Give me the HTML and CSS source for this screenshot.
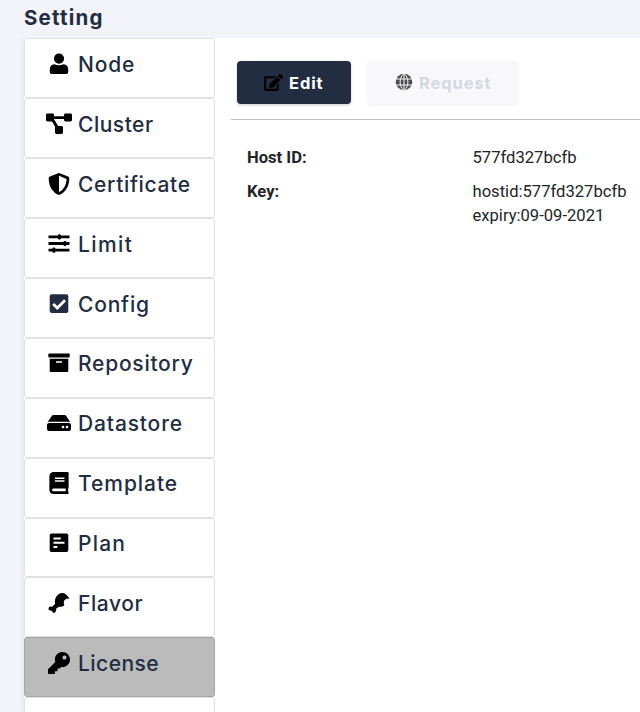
FILE: index.html
```html
<!DOCTYPE html>
<html lang="en">
<head>
<meta charset="utf-8">
<title>Setting</title>
<link rel="stylesheet" href="styles.css">
</head>
<body>
<h1 class="title">Setting</h1>
<div class="layout">
  <nav class="menu">
    <a class="item"><svg class="icon" viewBox="0 0 24 22"><circle cx="12" cy="5.6" r="5.1"/><path d="M7.5 11.2Q12 13.2 16.500 11.200Q21.200 11.800 21.200 16.500V19Q21.200 21 19.200 21H4.800Q2.800 21 2.800 19V16.500Q2.800 11.800 7.500 11.200Z"/></svg><span class="label node">Node</span></a>
    <a class="item"><svg class="icon wide" viewBox="0 0 28 22"><rect x="1" y="0.500" width="8" height="8" rx="1.400"/><rect x="19" y="0.500" width="8" height="8" rx="1.400"/><rect x="10" y="13" width="8" height="8" rx="1.400"/><path d="M8 3.300H20V6H8Z M6.300 7.300L8.900 5.900L13.300 13.300L10.700 14.700Z"/></svg><span class="label cluster">Cluster</span></a>
    <a class="item"><svg class="icon" viewBox="0 0 512 512"><path fill-rule="evenodd" d="M466.500 83.700l-192-80a48.150 48.150 0 0 0-36.900 0l-192 80C27.700 91.100 16 108.600 16 128c0 198.500 114.500 335.700 221.500 380.300 11.800 4.900 25.100 4.900 36.900 0C360.100 472.600 496 349.300 496 128c0-19.400-11.700-36.900-29.500-44.300zM256.100 446.300l-.1-381 175.900 73.300c-3.300 151.400-82.100 261.100-175.800 307.700z"/></svg><span class="label certificate">Certificate</span></a>
    <a class="item"><svg class="icon" viewBox="0 0 24 22"><path d="M1.500 2.500H22.500V5.300H1.500ZM1.500 9.100H22.500V11.900H1.500ZM1.500 15.700H22.500V18.500H1.500Z"/><rect x="11" y="1.300" width="2.800" height="5.200" rx="1"/><rect x="16.500" y="7.900" width="2.800" height="5.200" rx="1"/><rect x="5.500" y="14.500" width="2.800" height="5.200" rx="1"/></svg><span class="label limit">Limit</span></a>
    <a class="item"><svg class="icon navy" viewBox="0 0 24 22"><rect x="2.700" y="1.300" width="18.600" height="18.600" rx="2"/><path class="line" d="M6.200 11.100L10.300 15L18 7.200"/></svg><span class="label config">Config</span></a>
    <a class="item"><svg class="icon" viewBox="0 0 24 22"><rect x="1.300" y="1.500" width="21.400" height="4" rx="1"/><path fill-rule="evenodd" d="M2.700 6.700H21.300V18.700Q21.300 20 20 20H4Q2.700 20 2.700 18.700ZM9 9.300V10.700H15V9.300Z"/></svg><span class="label repository">Repository</span></a>
    <a class="item"><svg class="icon" viewBox="0 0 576 512"><path d="M576 304v96c0 26.500-21.500 48-48 48H48c-26.500 0-48-21.500-48-48v-96c0-26.500 21.500-48 48-48h480c26.500 0 48 21.500 48 48zm-48-80a79.600 79.600 0 0 1 30.800 6.200L462.300 85.400A48 48 0 0 0 422.300 64H153.700a48 48 0 0 0-40 21.400L17.200 230.200A79.600 79.600 0 0 1 48 224zm-48 96c-17.700 0-32 14.300-32 32s14.300 32 32 32 32-14.300 32-32-14.300-32-32-32zm-96 0c-17.700 0-32 14.300-32 32s14.300 32 32 32 32-14.300 32-32-14.300-32-32-32z"/></svg><span class="label datastore">Datastore</span></a>
    <a class="item"><svg class="icon" viewBox="0 0 448 512"><path d="M448 360V24c0-13.300-10.700-24-24-24H96C43 0 0 43 0 96v320c0 53 43 96 96 96h328c13.300 0 24-10.700 24-24v-16c0-7.500-3.500-14.300-8.900-18.700-4.200-15.400-4.200-59.300 0-74.700 5.400-4.300 8.900-11.100 8.900-18.600zM128 134c0-3.300 2.700-6 6-6h212c3.300 0 6 2.700 6 6v20c0 3.300-2.700 6-6 6H134c-3.300 0-6-2.700-6-6v-20zm0 64c0-3.300 2.700-6 6-6h212c3.300 0 6 2.700 6 6v20c0 3.300-2.700 6-6 6H134c-3.300 0-6-2.700-6-6v-20zm253.400 250H96c-17.700 0-32-14.300-32-32 0-17.600 14.400-32 32-32h285.400c-1.900 17.100-1.900 46.900 0 64z"/></svg><span class="label template">Template</span></a>
    <a class="item"><svg class="icon" viewBox="0 0 24 22"><path fill-rule="evenodd" d="M4.500 1.500H19.500Q21.300 1.500 21.300 3.300V18.300Q21.300 20.100 19.500 20.100H4.500Q2.700 20.100 2.700 18.300V3.300Q2.700 1.500 4.500 1.500ZM6.500 5.500V7.500H13.700V5.500ZM6.500 9.700V11.700H17.500V9.700ZM6.500 13.900V15.900H10.300V13.900Z"/></svg><span class="label plan">Plan</span></a>
    <a class="item"><svg class="icon" viewBox="0 0 24 22"><path d="M22.500 6.700Q19.500 5.900 17.400 8.200Q16.300 10 17.300 13.300Q15.300 15.200 12 14.700L9 16.700Q9.800 19.500 7.600 20.800Q5.600 21.400 5.200 18.900Q1.800 18.900 1.400 16.800Q1.600 13.900 5 14.700L8.100 12Q7 5.500 11.500 2.200Q17.800-1.600 22.500 6.700Z"/></svg><span class="label flavor">Flavor</span></a>
    <a class="item active"><svg class="icon" viewBox="0 0 512 512"><path d="M512 176c0 97.200-78.800 176-176 176-11.200 0-22.200-1.100-32.800-3.100l-24 27c-4.600 5.100-11.100 8.100-18 8.100H224v40c0 13.300-10.700 24-24 24h-40v40c0 13.300-10.700 24-24 24H24c-13.300 0-24-10.700-24-24v-78.100c0-6.400 2.500-12.500 7-17l161.800-161.800C162.900 213.800 160 195.300 160 176 160 78.800 238.800 0 336 0c97.500 0 176 78.500 176 176zM336 128c0 26.500 21.500 48 48 48s48-21.500 48-48-21.500-48-48-48-48 21.500-48 48z"/></svg><span class="label license">License</span></a>
    <a class="item"></a>
  </nav>
  <main class="panel">
    <div class="toolbar">
      <button class="btn edit"><svg class="btn-icon pen" viewBox="0 0 576 512"><path d="M402.600 83.200l90.200 90.200c3.800 3.800 3.800 10 0 13.800L274.400 405.600l-92.800 10.300c-12.400 1.400-22.900-9.100-21.500-21.500l10.300-92.800L388.800 83.200c3.800-3.800 10-3.800 13.800 0zm162-22.900l-48.800-48.800c-15.200-15.200-39.900-15.200-55.200 0l-35.400 35.400c-3.800 3.800-3.800 10 0 13.800l90.200 90.200c3.800 3.800 10 3.800 13.800 0l35.400-35.400c15.200-15.300 15.200-40 0-55.200zM384 346.200V448H64V128h229.800c3.200 0 6.200-1.300 8.500-3.500l40-40c7.600-7.600 2.200-20.500-8.500-20.500H48C21.500 64 0 85.500 0 112v352c0 26.500 21.500 48 48 48h352c26.500 0 48-21.500 48-48V306.200c0-10.700-12.900-16-20.500-8.500l-40 40c-2.200 2.300-3.500 5.300-3.500 8.500z"/></svg><span class="btn-text">Edit</span></button>
      <button class="btn request" disabled><svg class="btn-icon globe" viewBox="0 0 18 18"><circle cx="9" cy="9" r="8.300"/><path class="grid" d="M0 6H18M0 12H18M9 0V18M9 .5C3.800 4.500 3.800 13.500 9 17.500M9 .5C14.200 4.500 14.200 13.500 9 17.500"/></svg><span class="btn-text">Request</span></button>
    </div>
    <dl class="details">
      <dt>Host ID:</dt><dd>577fd327bcfb</dd>
      <dt>Key:</dt><dd>hostid:577fd327bcfb<br>expiry:09-09-2021</dd>
    </dl>
  </main>
</div>
</body>
</html>
```
FILE: styles.css
```css
* { box-sizing: border-box; }
body {
  margin: 0;
  height: 712px;
  overflow: hidden;
  background: #f3f4f9;
  color: #212529;
  font-family: Roboto, sans-serif;
}
.title {
  margin: 0;
  height: 38.4px;
  padding: 5px 0 0 24px;
  color: #232d42;
  font: 700 20.5px/26px Inter, sans-serif;
  letter-spacing: 1.2px;
}
.layout {
  display: flex;
  height: 673.6px;
  padding-left: 24px;
  overflow: hidden;
}
.menu {
  flex: 0 0 191px;
  background: #fff;
  box-shadow: 0 0 5px rgba(35, 45, 66, .12);
}
.item {
  display: flex;
  align-items: flex-start;
  height: 59.9px;
  padding: 12px 0 0 21px;
  border: 1px solid #e1e1e2;
  border-radius: 3px;
  background: #fff;
}
.active { background: #bbb; border-color: #a5a5a5; }
.icon { width: 24px; height: 22px; margin: 1.55px 7px 0 1px; fill: #000; flex: none; }
.wide { width: 28px; margin: 1.55px 5px 0 -1px; }
.navy { fill: #232d42; }
.line { fill: none; stroke: #fff; stroke-width: 2.7; }
.label {
  padding-top: .55px;
  color: #232d42;
  font: 500 21px/26px Inter, sans-serif;
  white-space: nowrap;
}
.node { letter-spacing: .8px; }
.cluster { letter-spacing: .5px; }
.certificate { letter-spacing: .65px; }
.limit { letter-spacing: 1.4px; }
.config { letter-spacing: .8px; }
.repository { letter-spacing: .75px; }
.datastore { letter-spacing: .85px; }
.template { letter-spacing: .95px; }
.plan { letter-spacing: 1.2px; }
.flavor { letter-spacing: .6px; }
.license { letter-spacing: .45px; }
.panel { flex: 1; padding-left: 16px; background: #fff; }
.toolbar {
  display: flex;
  gap: 16px;
  height: 81.6px;
  padding: 22.6px 0 0 6px;
  border-bottom: 1px solid #bfc0c9;
}
.btn {
  display: flex;
  align-items: center;
  height: 43px;
  padding: 0;
  border: 0;
  border-radius: 4px;
  font: 700 16.5px/24px Inter, sans-serif;
  letter-spacing: .9px;
  box-shadow: 0 1px 3px rgba(0, 0, 0, .2);
}
.btn-text { padding-top: 1px; }
.edit { width: 114px; padding-left: 27px; background: #232d42; color: #fff; }
.request { width: 151px; padding-left: 28px; background: #f8f8fb; color: #d5d8e2; box-shadow: 0 1px 3px rgba(0, 0, 0, .07); }
.pen { width: 19px; height: 17px; margin-right: 6px; }
.globe { width: 18px; height: 18px; margin-right: 6px; fill: #4d4d4d; }
.grid { fill: none; stroke: #f8f8fb; stroke-width: 1; }
.details {
  display: grid;
  grid-template-columns: 225.5px 1fr;
  row-gap: 9px;
  margin: 0;
  padding: 26.4px 0 0 16px;
  font-size: 16.6px;
  line-height: 24.5px;
}
dt { font-weight: 700; }
dd { margin: 0; white-space: nowrap; }
```
